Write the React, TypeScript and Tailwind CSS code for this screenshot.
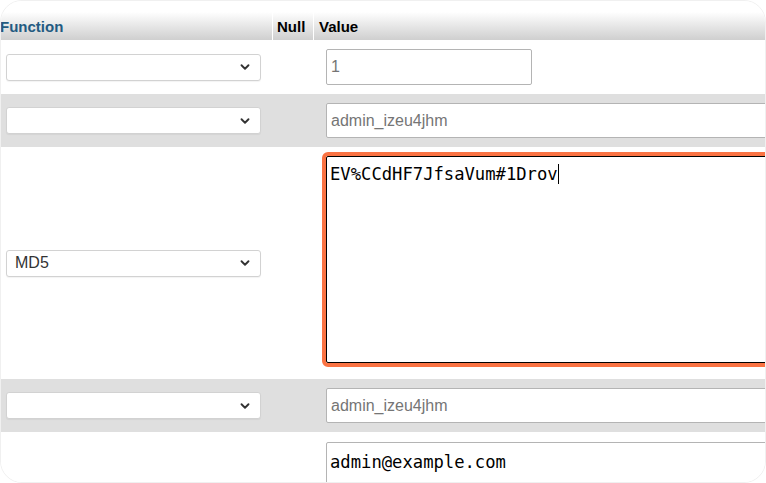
import { ChevronDown } from 'lucide-react';

const sans = { fontFamily: '"Liberation Sans", Arial, sans-serif' };
const mono = { fontFamily: '"DejaVu Sans Mono", "Liberation Mono", monospace' };

function FnSelect({ value = '' }: { value?: string }) {
    return (
        <div className="flex items-center justify-between w-[255px] h-[27px] ml-[5px] bg-white border border-[#d2d2d2] rounded-[3px] pl-[8px] pr-[8px] shadow-[0_1px_1px_rgba(0,0,0,0.05)]">
            <span className="text-[16px] text-[#333]">{value}</span>
            <ChevronDown className="w-[14px] h-[14px] text-[#333]" strokeWidth={3.2} />
        </div>
    );
}

function TextInput({ value, wide }: { value: string; wide?: boolean }) {
    return (
        <div
            className={
                wide
                    ? "flex items-center w-[460px] h-[35px] shrink-0 bg-white border border-[#b4b4b4] rounded-[2px] pl-[4px] text-[16px] text-[#757575]"
                    : "flex items-center w-[206px] h-[36px] shrink-0 bg-white border border-[#b4b4b4] rounded-[2px] pl-[4px] text-[16px] text-[#757575]"
            }
        >
            {value}
        </div>
    );
}

export default function App() {
    return (
        <div className="w-[766px] h-[483px] bg-white overflow-hidden" style={sans}>
            <div className="w-[766px] h-[483px] rounded-[22px] border border-[#f0f0f0] overflow-hidden bg-white">
                {/* header */}
                <div className="flex h-[40px] bg-gradient-to-b from-white from-30% to-[#cfcfcf] -mt-px text-[15px] font-bold">
                    <div className="w-[273px] shrink-0 border-r border-white flex items-end pb-[2px] -ml-px text-[#235a81]">
                        Function
                    </div>
                    <div className="w-[41px] shrink-0 border-r border-white flex items-end pb-[2px] pl-[4px] text-black">
                        Null
                    </div>
                    <div className="flex-1 flex items-end pb-[2px] pl-[5px] text-black">Value</div>
                </div>

                {/* row 1 */}
                <div className="flex items-center h-[54px] bg-white">
                    <div className="w-[314px] shrink-0 flex items-center">
                        <FnSelect />
                    </div>
                    <div className="pl-[11px] shrink-0">
                        <TextInput value="1" />
                    </div>
                </div>

                {/* row 2 */}
                <div className="flex items-center h-[53px] bg-[#dfdfdf]">
                    <div className="w-[314px] shrink-0 flex items-center">
                        <FnSelect />
                    </div>
                    <div className="pl-[11px] shrink-0">
                        <TextInput value="admin_izeu4jhm" wide />
                    </div>
                </div>

                {/* row 3 */}
                <div className="flex h-[232px] bg-white">
                    <div className="w-[314px] shrink-0 flex items-center">
                        <FnSelect value="MD5" />
                    </div>
                    <div className="pl-[7px] pt-[5px] shrink-0">
                        <div className="w-[470px] h-[215px] rounded-[6px] border-[4px] border-[#fa7343]">
                            <div className="h-full border border-black rounded-[2px] pl-[3px] pt-[5px] text-[17.2px] text-black" style={mono}>
                                EV%CCdHF7JfsaVum#1Drov<span className="inline-block w-px h-[20px] bg-black align-[-4px]" />
                            </div>
                        </div>
                    </div>
                </div>

                {/* row 4 */}
                <div className="flex items-center h-[53px] bg-[#dfdfdf]">
                    <div className="w-[314px] shrink-0 flex items-center">
                        <FnSelect />
                    </div>
                    <div className="pl-[11px] shrink-0">
                        <TextInput value="admin_izeu4jhm" wide />
                    </div>
                </div>

                {/* row 5 */}
                <div className="flex h-[60px] bg-white">
                    <div className="w-[314px] shrink-0" />
                    <div className="pl-[11px] pt-[10px] shrink-0">
                        <div className="w-[460px] h-[80px] border border-[#b4b4b4] rounded-[2px] pl-[3px] pt-[7px] text-[17.2px] text-black" style={mono}>
                            admin@example.com
                        </div>
                    </div>
                </div>
            </div>
        </div>
    );
}
